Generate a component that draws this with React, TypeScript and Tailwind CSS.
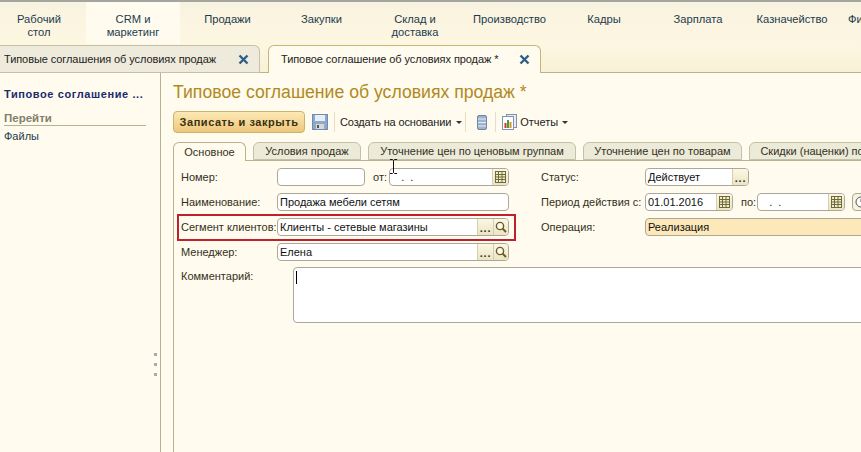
import React from "react";

const F = "font-['Liberation_Sans',Arial,sans-serif]";

function NavItem({ a, b, w, active }: { a: string; b?: string; w: string; active?: boolean }) {
  return (
    <div className={`${w} shrink-0 flex flex-col items-center pt-[11px] text-[11.2px] leading-[13px] text-[#1c3b4d] ${active ? "bg-[#fffbee]" : ""}`}>
      <span>{a}</span>
      {b && <span>{b}</span>}
    </div>
  );
}

function Close() {
  return (
    <svg width="11" height="11" viewBox="0 0 11 11" className="shrink-0">
      <path d="M1.5 1.5l8 8M9.5 1.5l-8 8" stroke="#2f5f85" strokeWidth="2.4" />
    </svg>
  );
}

function Cal() {
  return (
    <svg width="11" height="12" viewBox="0 0 11 12">
      <rect x="0.5" y="0.5" width="10" height="11" fill="#f4edc9" stroke="#6d6a3c" />
      <path d="M0 3.5h11M0 6h11M0 8.5h11M3.5 1v11M7 1v11" stroke="#6d6a3c" strokeWidth="1" />
    </svg>
  );
}

function Mag() {
  return (
    <svg width="12" height="12" viewBox="0 0 12 12">
      <circle cx="5" cy="5" r="3.6" fill="#fdfbf0" stroke="#6b5a24" strokeWidth="1.4" />
      <path d="M7.6 7.6l3.4 3.4" stroke="#6b5a24" strokeWidth="2" />
    </svg>
  );
}

function Btn({ children, w }: { children: React.ReactNode; w: string }) {
  return (
    <div className={`${w} h-full shrink-0 border-l border-[#d4cfae] bg-gradient-to-b from-[#fbf7e4] to-[#ece5c2] flex items-center justify-center`}>
      {children}
    </div>
  );
}

function Dots() {
  return <span className="font-bold text-[11px] leading-[11px] tracking-[0.8px] mt-[3px] text-[#333]">...</span>;
}

function Field({ w, v, bg, children }: { w: string; v?: string; bg?: string; children?: React.ReactNode }) {
  return (
    <div className={`${w} h-[18px] shrink-0 flex items-center rounded-[4px] border border-[#aca899] overflow-hidden ${bg ?? "bg-white"}`}>
      <span className="flex-1 min-w-0 pl-[2px] text-[11px] leading-[16px] text-[#111] whitespace-pre">{v}</span>
      {children}
    </div>
  );
}

function Label({ w, t }: { w: string; t: string }) {
  return <span className={`${w} shrink-0 text-[11px] leading-[18px] text-[#33301a] whitespace-nowrap`}>{t}</span>;
}

function Tab({ t, w, active }: { t: string; w: string; active?: boolean }) {
  return (
    <div className={`${w} shrink-0 rounded-t-[6px] border flex items-center justify-center text-[11px] text-[#33301a] whitespace-nowrap ${active ? "bg-[#fffbee] border-b-0 h-[19px] border-[#b8b38e]" : "h-[18px] bg-[#ecead9] border-[#c5c1a6]"}`}>
      {t}
    </div>
  );
}

function Sep() {
  return <div className="w-px h-[20px] bg-[#e4e0c8] shrink-0" />;
}

function Caret() {
  return <span className="w-0 h-0 border-x-[3px] border-x-transparent border-t-[3px] border-t-[#333] inline-block" />;
}

export default function App() {
  return (
    <div className={`${F} w-[861px] h-[452px] overflow-hidden flex flex-col bg-[#fffbee]`}>
      <div className="h-[2px] shrink-0 bg-[#a5a5a0]" />
      <div className="h-[42px] shrink-0 flex overflow-hidden bg-gradient-to-b from-[#f8f2e0] to-[#fdf7e2] whitespace-nowrap">
        <div className="w-[86px] shrink-0 pr-[8px]"><NavItem a="Рабочий" b="стол" w="w-full" /></div>
        <NavItem a="CRM и" b="маркетинг" w="w-[94px]" active />
        <NavItem a="Продажи" w="w-[95px]" />
        <NavItem a="Закупки" w="w-[93px]" />
        <NavItem a="Склад и" b="доставка" w="w-[94px]" />
        <NavItem a="Производство" w="w-[95px]" />
        <NavItem a="Кадры" w="w-[94px]" />
        <NavItem a="Зарплата" w="w-[94px]" />
        <NavItem a="Казначейство" w="w-[94px]" />
        <div className="shrink-0 pl-[9px] pt-[11px] text-[11.2px] leading-[13px] text-[#1c3b4d]">Финансы</div>
      </div>
      <div className="h-[29px] shrink-0 flex items-end bg-gradient-to-b from-[#fdf7e2] to-[#f8f1d6] border-b border-[#b8b38e]">
        <div className="w-[260px] h-[28px] mb-[-1px] shrink-0 flex items-center justify-between pl-[4px] pr-[10px] bg-[#efebdc] border-r border-t border-b border-[#c5c1a6] rounded-tr-[6px] text-[11px] tracking-[-0.08px] text-[#222] whitespace-nowrap">
          <span>Типовые соглашения об условиях продаж</span>
          <Close />
        </div>
        <div className="ml-[8px] w-[273px] h-[28px] mb-[-1px] shrink-0 flex items-center justify-between pl-[12px] pr-[10px] bg-[#fffbee] border-x border-t border-[#c9b472] rounded-t-[6px] text-[11px] tracking-[-0.08px] text-[#222] whitespace-nowrap">
          <span>Типовое соглашение об условиях продаж *</span>
          <Close />
        </div>
      </div>
      <div className="flex-1 min-h-0 flex">
        <div className="w-[161px] shrink-0 flex flex-col border-r border-[#b8b38e] pl-[4px] pr-[3px] pt-[14px]">
          <div className="w-[142px]">
            <div className="text-[11px] leading-[14px] font-bold tracking-[0.6px] text-[#1a2a6c] whitespace-nowrap">Типовое соглашение ...</div>
            <div className="mt-[10px] text-[11.5px] leading-[14px] font-bold text-[#80806c] border-b border-[#b8b38e]">Перейти</div>
            <div className="mt-[3px] text-[11px] leading-[14px] text-[#1c3b4d]">Файлы</div>
          </div>
          <div className="self-end mt-[210px] flex flex-col gap-[7px]">
            <span className="block w-[3px] h-[3px] bg-[#aaa]" />
            <span className="block w-[3px] h-[3px] bg-[#aaa]" />
            <span className="block w-[3px] h-[3px] bg-[#aaa]" />
          </div>
        </div>
        <div className="w-[12px] shrink-0" />
        <div className="flex-1 min-w-0 flex flex-col">
          <div className="h-[37px] shrink-0 pt-[7px] text-[17.65px] leading-[24px] text-[#b08a1e] whitespace-nowrap">Типовое соглашение об условиях продаж *</div>
          <div className="h-[24px] shrink-0 flex items-center text-[11px] text-[#222] whitespace-nowrap">
            <div className="w-[132px] h-[22px] shrink-0 rounded-[4px] border border-[#c9b472] bg-gradient-to-b from-[#fce9b5] to-[#eec77c] flex items-center justify-center text-[11px] font-bold tracking-[0.55px] text-[#3a3010]">Записать и закрыть</div>
            <svg width="16" height="16" viewBox="0 0 16 16" className="ml-[7px] shrink-0">
              <rect x="0.5" y="0.5" width="15" height="15" fill="#8fa9cc" stroke="#6f8bb0" />
              <rect x="3" y="1" width="10" height="6" fill="#e8eef6" />
              <rect x="4" y="10" width="8" height="5" fill="#d8d8d8" />
              <rect x="5" y="11" width="2" height="3" fill="#555" />
            </svg>
            <div className="ml-[6px]"><Sep /></div>
            <span className="ml-[5px] tracking-[-0.15px]">Создать на основании</span>
            <span className="ml-[5px] flex"><Caret /></span>
            <div className="ml-[3px]"><Sep /></div>
            <svg width="10" height="15" viewBox="0 0 10 15" className="ml-[11px] shrink-0">
              <rect x="0.5" y="0.5" width="9" height="14" rx="1.5" fill="#9db4cf" stroke="#6f87a6" />
              <path d="M1 4h8M1 7.5h8M1 11h8" stroke="#e6edf5" strokeWidth="1" />
            </svg>
            <div className="ml-[8px]"><Sep /></div>
            <svg width="16" height="16" viewBox="0 0 16 16" className="ml-[6px] shrink-0">
              <rect x="4.5" y="0.5" width="10" height="13" fill="#e8eef6" stroke="#7f93ad" />
              <rect x="0.5" y="2.5" width="11" height="13" fill="#fff" stroke="#7f93ad" />
              <rect x="2.5" y="9" width="2" height="5" fill="#c9352b" />
              <rect x="5" y="6" width="2" height="8" fill="#4b9a3e" />
              <rect x="7.5" y="8" width="2" height="6" fill="#c99a2b" />
            </svg>
            <span className="ml-[2px]">Отчеты</span>
            <span className="ml-[4px] flex"><Caret /></span>
          </div>
          <div className="h-[19px] mt-[8px] shrink-0 flex items-end gap-[7px] border-b border-[#b8b38e]">
            <div className="mb-[-1px]"><Tab t="Основное" w="w-[73px]" active /></div>
            <Tab t="Условия продаж" w="w-[108px]" />
            <Tab t="Уточнение цен по ценовым группам" w="w-[208px]" />
            <Tab t="Уточнение цен по товарам" w="w-[159px]" />
            <Tab t="Скидки (наценки) по ассортименту" w="w-[200px]" />
          </div>
          <div className="relative flex-1 min-h-0 border-l border-[#b8b38e] pl-[7px] pt-[7px]">
            <svg width="9" height="15" viewBox="0 0 9 15" className="absolute left-[215px] top-[-2px]">
              <path d="M1 .5h2.5L4.5 1.5 5.5.5H8M4.5 1.5v12M1 14.5h2.5l1-1 1 1H8" fill="none" stroke="#111" />
            </svg>
            <div className="flex items-start">
              <div className="w-[328px] shrink-0 flex flex-col gap-[7px]">
                <div className="flex items-center h-[18px]">
                  <Label w="w-[96px]" t="Номер:" />
                  <Field w="w-[88px]" />
                  <Label w="w-[16px] ml-[8px]" t="от:" />
                  <Field w="w-[120px]" v="   .  ." >
                    <Btn w="w-[16px]"><Cal /></Btn>
                  </Field>
                </div>
                <div className="flex items-center h-[18px]">
                  <Label w="w-[96px]" t="Наименование:" />
                  <Field w="w-[232px]" v="Продажа мебели сетям" />
                </div>
                <div className="relative flex items-center h-[18px]">
                  <div className="absolute left-[-4px] top-[-4px] w-[339px] h-[27px] border-2 border-[#c0202a]" />
                  <Label w="w-[96px]" t="Сегмент клиентов:" />
                  <Field w="w-[232px]" v="Клиенты - сетевые магазины">
                    <Btn w="w-[16px]"><Dots /></Btn>
                    <Btn w="w-[15px]"><Mag /></Btn>
                  </Field>
                </div>
                <div className="flex items-center h-[18px]">
                  <Label w="w-[96px]" t="Менеджер:" />
                  <Field w="w-[232px]" v="Елена">
                    <Btn w="w-[16px]"><Dots /></Btn>
                    <Btn w="w-[15px]"><Mag /></Btn>
                  </Field>
                </div>
              </div>
              <div className="ml-[32px] shrink-0 flex flex-col gap-[7px]">
                <div className="flex items-center h-[18px]">
                  <Label w="w-[104px]" t="Статус:" />
                  <Field w="w-[104px]" v="Действует">
                    <Btn w="w-[16px]"><Dots /></Btn>
                  </Field>
                </div>
                <div className="flex items-center h-[18px]">
                  <Label w="w-[104px]" t="Период действия с:" />
                  <Field w="w-[88px]" v="01.01.2016">
                    <Btn w="w-[16px]"><Cal /></Btn>
                  </Field>
                  <Label w="w-[16px] ml-[8px]" t="по:" />
                  <Field w="w-[88px]" v="   .  .">
                    <Btn w="w-[16px]"><Cal /></Btn>
                  </Field>
                  <div className="ml-[7px] w-[18px] h-[18px] shrink-0 rounded-[4px] border border-[#aca899] bg-[#f6f2dc] flex items-center justify-center">
                    <svg width="12" height="12" viewBox="0 0 12 12">
                      <circle cx="6" cy="6" r="5" fill="#fff" stroke="#555" />
                      <path d="M6 3v3h2.5" fill="none" stroke="#555" />
                    </svg>
                  </div>
                </div>
                <div className="flex items-center h-[18px]">
                  <Label w="w-[104px]" t="Операция:" />
                  <Field w="w-[230px]" v="Реализация" bg="bg-[#fde8b9]" />
                </div>
              </div>
            </div>
            <div className="flex items-start mt-[6px]">
              <Label w="w-[112px]" t="Комментарий:" />
              <div className="w-[600px] h-[56px] shrink-0 rounded-[4px] border border-[#aca899] bg-white pl-[2px] pt-[3px]">
                <div className="w-px h-[13px] bg-black" />
              </div>
            </div>
          </div>
        </div>
      </div>
    </div>
  );
}
